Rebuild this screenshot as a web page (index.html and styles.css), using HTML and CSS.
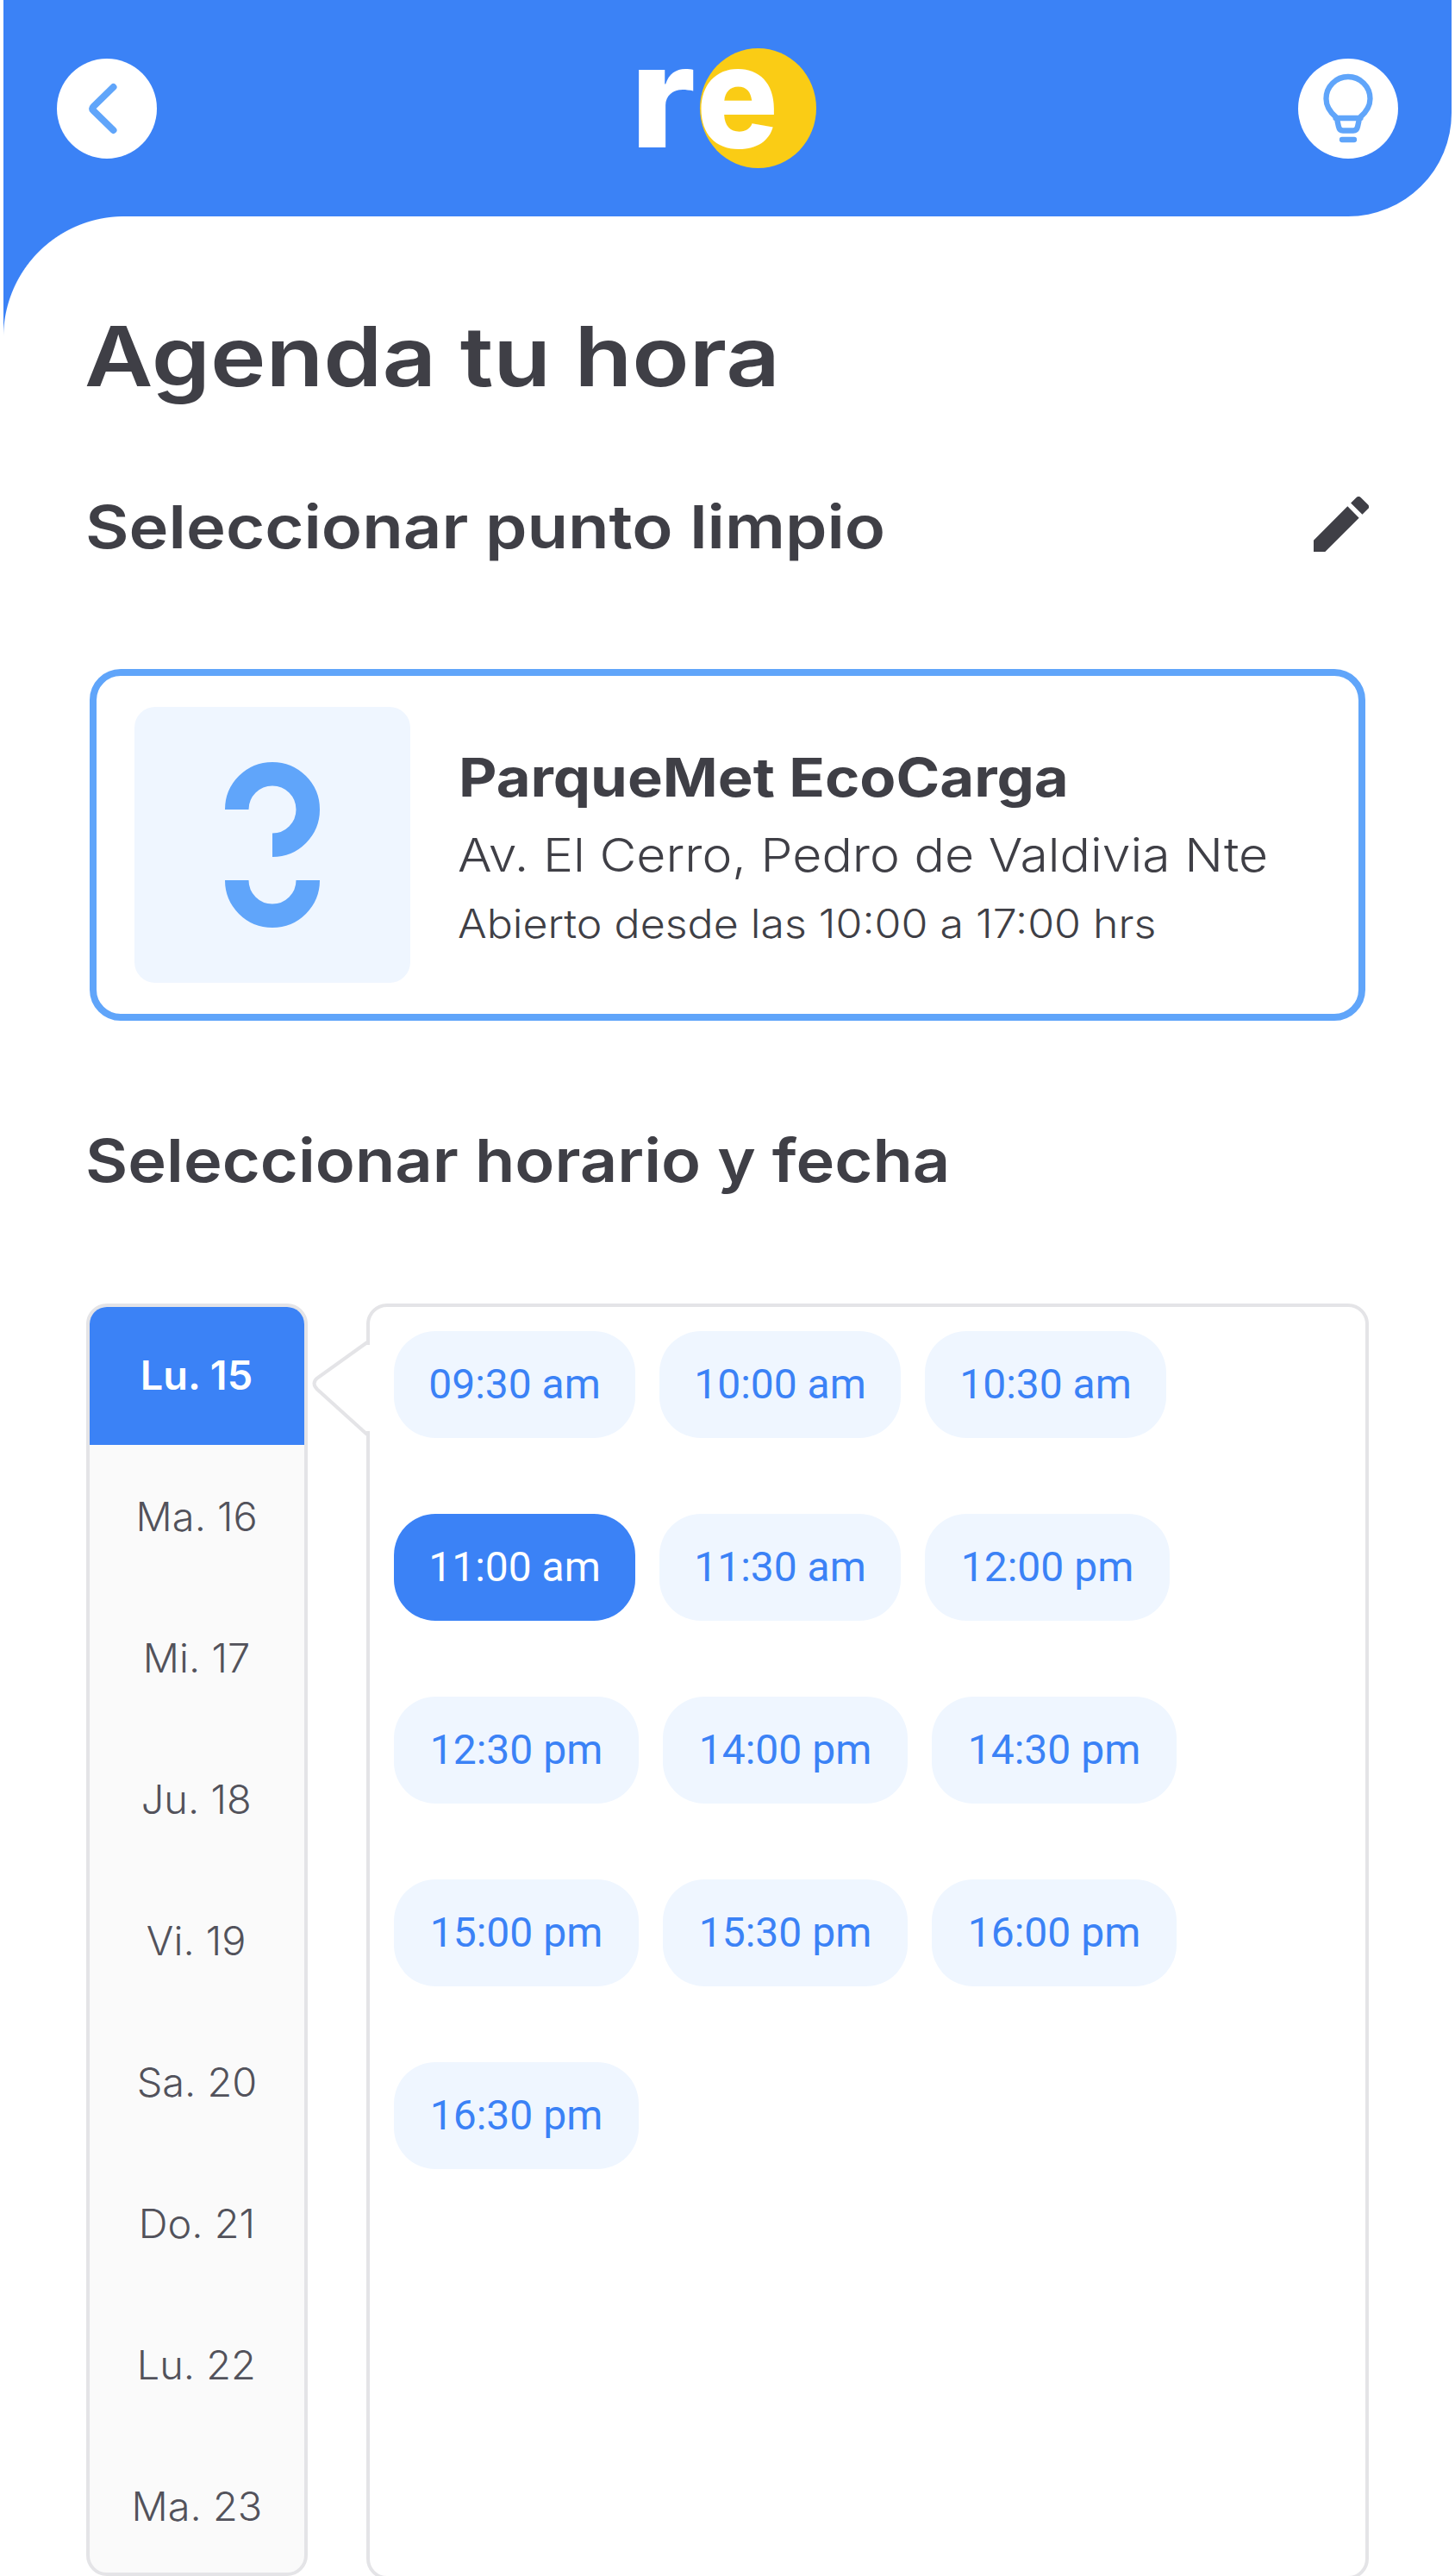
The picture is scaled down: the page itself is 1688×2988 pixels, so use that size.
FILE: index.html
```html
<!DOCTYPE html>
<html lang="es">
<head>
<meta charset="utf-8">
<title>Agenda tu hora</title>
<link rel="stylesheet" href="styles.css">
</head>
<body>
<div class="screen">
  <header class="topbar">
    <button class="round-btn" aria-label="Volver">
      <svg viewBox="0 0 116 116"><path d="M65.500 33 42.500 55.500q-2.500 2.500 0 5L65.500 83" class="chevron"/></svg>
    </button>
    <div class="logo"><span class="logo-r">r</span><span class="logo-e">e</span></div>
    <button class="round-btn" aria-label="Ideas">
      <svg viewBox="0 0 116 116"><path class="bulb" d="M44 68C37 62 32.500 55 32.500 46.500a25.500 25.500 0 0 1 51 0C83.500 55 79 62 72 68M43.500 69h29M45 70l2 9q1 4.500 5 4.500h12q4 0 5-4.500l2-9M51 94h14"/></svg>
    </button>
  </header>
  <main class="content">
    <h1 class="title"><span class="wide">Agenda tu hora</span></h1>
    <div class="section-head">
      <h2 class="subtitle"><span class="wide">Seleccionar punto limpio</span></h2>
      <svg class="pencil" viewBox="3 3 18 18"><path d="M3 17.250V21h3.750L17.810 9.940l-3.750-3.750L3 17.250zM20.710 7.040a1 1 0 0 0 0-1.410l-2.340-2.340a1 1 0 0 0-1.410 0l-1.830 1.830 3.750 3.750 1.830-1.830z"/></svg>
    </div>
    <section class="place">
      <div class="thumb">
        <svg viewBox="0 0 110 192"><path d="M13.750 55A41.250 41.250 0 1 1 55 96.250"/><path d="M13.750 137a41.250 41.250 0 0 0 82.500 0"/></svg>
      </div>
      <div class="place-info">
        <div class="place-name"><span class="wide">ParqueMet EcoCarga</span></div>
        <div class="place-address"><span class="wide">Av. El Cerro, Pedro de Valdivia Nte</span></div>
        <div class="place-hours"><span class="wide">Abierto desde las 10:00 a 17:00 hrs</span></div>
      </div>
    </section>
    <h2 class="subtitle schedule-title"><span class="wide">Seleccionar horario y fecha</span></h2>
    <div class="schedule">
      <div class="days">
        <div class="day active"><span>Lu. 15</span></div>
        <div class="day"><span>Ma. 16</span></div>
        <div class="day"><span>Mi. 17</span></div>
        <div class="day"><span>Ju. 18</span></div>
        <div class="day"><span>Vi. 19</span></div>
        <div class="day"><span>Sa. 20</span></div>
        <div class="day"><span>Do. 21</span></div>
        <div class="day"><span>Lu. 22</span></div>
        <div class="day"><span>Ma. 23</span></div>
      </div>
      <div class="slots">
        <svg class="pointer" viewBox="0 0 70 116"><rect class="gap" x="63" y="8" width="6" height="100"/><path d="M65 5 7 46.500q-7 6 0 13L65 112"/></svg>
        <div class="row"><span class="slot">09:30 am</span><span class="slot">10:00 am</span><span class="slot">10:30 am</span></div>
        <div class="row"><span class="slot chosen">11:00 am</span><span class="slot">11:30 am</span><span class="slot pm">12:00 pm</span></div>
        <div class="row"><span class="slot pm">12:30 pm</span><span class="slot pm">14:00 pm</span><span class="slot pm">14:30 pm</span></div>
        <div class="row"><span class="slot pm">15:00 pm</span><span class="slot pm">15:30 pm</span><span class="slot pm">16:00 pm</span></div>
        <div class="row"><span class="slot pm">16:30 pm</span></div>
      </div>
    </div>
  </main>
</div>
</body>
</html>
```
FILE: styles.css
```css
* { box-sizing: border-box; }
html, body { margin: 0; background: #fff; }
body { height: 2988px; overflow: hidden; }
.screen {
  width: 1680px;
  height: 2988px;
  margin-left: 4px;
  font-family: Inter, "Open Sans", sans-serif;
  color: #3f3f46;
}
h1, h2 { margin: 0; }
.topbar {
  height: 251px;
  padding: 0 62px;
  display: flex;
  justify-content: space-between;
  align-items: center;
  background: #3b82f6;
  border-bottom-right-radius: 120px;
}
.round-btn {
  width: 116px;
  height: 116px;
  padding: 0;
  border: 0;
  border-radius: 50%;
  background: #fff;
}
.round-btn svg { display: block; width: 116px; height: 116px; }
.chevron, .bulb {
  fill: none;
  stroke: #60a5fa;
  stroke-width: 8;
  stroke-linecap: round;
  stroke-linejoin: round;
}
.bulb { stroke-width: 6.3; }
.logo {
  position: relative;
  width: 208px;
  height: 139px;
  display: flex;
  font-size: 165px;
  font-weight: 800;
  line-height: 111px;
  color: #fff;
}
/* Yellow disc behind the "e" */
.logo::before {
  content: "";
  position: absolute;
  top: 0;
  right: 1px;
  width: 135px;
  height: 139px;
  border-radius: 50%;
  background: #facc15;
}
.logo span { position: relative; transform-origin: left center; }
.logo-r { width: 77px; margin-left: -9px; transform: scaleX(1.1); }
.logo-e { transform: scaleX(.96); }
.content {
  height: 2737px;
  padding: 0 96px;
  background: radial-gradient(circle at 140px 140px, transparent 139.500px, #3b82f6 140.500px) 0 0 / 140px 140px no-repeat;
}
.wide { display: inline-block; white-space: nowrap; transform-origin: left center; }
.title { padding-top: 102px; height: 262px; font-size: 96px; font-weight: 600; line-height: 120px; }
.title .wide { margin-left: -2px; transform: scaleX(1.137); }
.section-head { display: flex; justify-content: space-between; height: 263px; padding-top: 53px; }
.subtitle { font-size: 69px; font-weight: 600; line-height: 90px; }
.subtitle .wide { margin-left: -1px; transform: scaleX(1.127); }
.pencil { width: 64px; height: 64px; margin-top: 10px; fill: #3f3f46; }
.place {
  display: flex;
  align-items: center;
  gap: 56px;
  width: 1480px;
  height: 408px;
  margin-left: 4px;
  padding-left: 44px;
  border: 8px solid #60a5fa;
  border-radius: 36px;
}
.thumb {
  width: 320px;
  height: 320px;
  border-radius: 24px;
  background: #eff6ff;
  display: flex;
  align-items: center;
  justify-content: center;
}
.thumb svg { width: 110px; height: 192px; fill: none; stroke: #60a5fa; stroke-width: 27.500; }
.place-info { padding-top: 2px; white-space: nowrap; }
.place-name { font-size: 61.500px; font-weight: 700; line-height: 92px; }
.place-name .wide { transform: scaleX(1.117); }
.place-address { font-size: 54px; font-weight: 300; line-height: 88px; }
.place-address .wide { margin-left: -1px; transform: scaleX(1.091); }
.place-hours { font-size: 46px; font-weight: 300; line-height: 70px; }
.place-hours .wide { margin-left: -1px; transform: scaleX(1.088); }
.schedule-title { padding-top: 117px; height: 328px; }
.schedule-title .wide { transform: scaleX(1.098); }
.schedule { display: flex; gap: 68px; }
.days {
  display: flex;
  flex-direction: column;
  gap: 4px;
  width: 257px;
  height: 1476px;
  border: 4px solid #e4e4e7;
  border-radius: 24px;
  background: #fafafa;
  overflow: hidden;
}
.day {
  flex: 0 0 160px;
  display: flex;
  align-items: center;
  justify-content: center;
  padding: 0 1px 3px 0;
  font-size: 46px;
  font-weight: 300;
  color: #52525b;
}
.day span { transform: scaleX(1.02); }
.day.active { background: #3b82f6; color: #fff; font-weight: 600; }
.slots {
  position: relative;
  display: flex;
  flex-direction: column;
  gap: 88px;
  width: 1163px;
  height: 1480px;
  padding: 28px;
  border: 4px solid #e4e4e7;
  border-radius: 24px;
}
.row { display: flex; gap: 28px; }
.slot {
  width: 280px;
  height: 124px;
  border-radius: 48px;
  background: #eff6ff;
  color: #3b82f6;
  font: 48px/124px Roboto, sans-serif;
  text-align: center;
}
.slot.pm { width: 284px; }
.slot.chosen { background: #3b82f6; color: #fff; }
.pointer { position: absolute; left: -68px; top: 36px; width: 70px; height: 116px; fill: none; stroke: #e4e4e7; stroke-width: 4; }
.pointer .gap { fill: #fff; stroke: none; }
```
